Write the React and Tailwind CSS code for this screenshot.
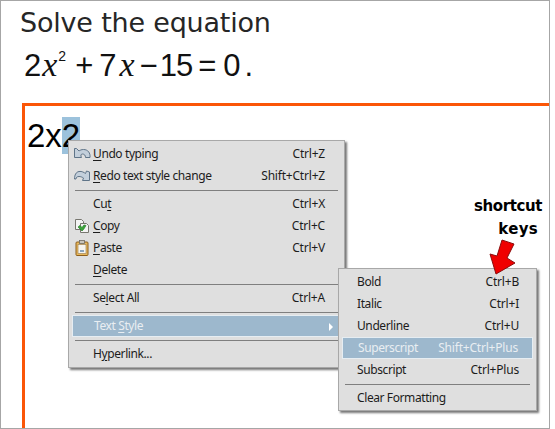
function U({ children }) {
  return <span className="underline decoration-1 underline-offset-2">{children}</span>;
}

function UndoIcon() {
  return (
    <svg width="18" height="14" viewBox="0 0 18 14" className="block">
      <path d="M1.500 2.500v9h7c-1-2-.8-3.500 1-3.500 2 0 3 1.500 3 3.500h4.500c.5-4.500-2-8-6.500-8-2 0-3.500.7-4.500 1.500L3.500 2.500z" fill="#c3cfdb" stroke="#5f7488" strokeWidth="1" />
    </svg>
  );
}

function RedoIcon() {
  return (
    <svg width="18" height="14" viewBox="0 0 18 14" className="block">
      <path d="M1.500 11c0-4 1.500-7 4.500-7.500 3-.5 5 1 6.500 2l1-2.500 3 1v8.500h-7l1-2.500c-1.500-1-3-1.500-4.500-1.500-2 0-3 1-3 2.500H2z" fill="#c3cfdb" stroke="#5f7488" strokeWidth="1" />
    </svg>
  );
}

function CopyIcon() {
  return (
    <svg width="16" height="16" viewBox="0 0 16 16" className="block">
      <path d="M1.500 1.500h6l2 2v8h-8z" fill="#f4f4f4" stroke="#77766f" />
      <path d="M6.500 5.500h6l2 2v7h-8z" fill="#f4f4f4" stroke="#77766f" />
      <path d="M4 9l4 4 1.500-1.500 2.500-4-2-.5-2 2.500-2-2z" fill="#3aa53a" stroke="#2b7b2b" strokeWidth=".7" />
    </svg>
  );
}

function PasteIcon() {
  return (
    <svg width="14" height="16" viewBox="0 0 14 16" className="block">
      <rect x="1" y="2" width="12" height="13.500" rx="1" fill="#e9b95c" stroke="#8c5e1c" />
      <rect x="3" y="4.500" width="8" height="9" fill="#f7f5ef" stroke="#a2875a" strokeWidth=".7" />
      <rect x="4.500" y="0.500" width="5" height="3" fill="#c9c5bb" stroke="#6f6a60" strokeWidth=".8" />
      <path d="M5 10h4v2H5z" fill="#8aa4bd" />
    </svg>
  );
}

function Item({ icon, children, shortcut, active, arrow, inset = "pl-[21px]", pr = "pr-[16px]" }) {
  return (
    <div className={"h-[22px] flex items-center justify-between " + (active ? "bg-[#9db8cd] text-[#e9eef2] border border-[#e6edf2] " : "text-[#1c1c1c] ") + inset + " " + pr + " relative"}>
      {icon && <span className="absolute left-[0px] top-[3px] w-[20px] flex justify-center">{icon}</span>}
      <span className="tracking-[-0.4px]">{children}</span>
      {shortcut && <span className="tracking-[-0.2px]">{shortcut}</span>}
      {arrow && <span className="absolute right-[7px] top-[7px] w-0 h-0 border-y-[4px] border-y-transparent border-l-[4px] border-l-white" />}
    </div>
  );
}

function Sep() {
  return (
    <div className="h-[6px] flex items-center px-[3px]">
      <div className="h-[1px] w-full bg-[#7f7f7f]" />
    </div>
  );
}

export default function App() {
  return (
    <div className="relative w-[555px] h-[429px] bg-white overflow-hidden">
      <div className="w-[550px] h-[429px] border border-[#a6a6a6] overflow-hidden flex flex-col pl-[19px]">
        <div className="shrink-0 h-[46px] pt-[4px] text-[27px] leading-[36px] text-[#262626] [font-family:'DejaVu_Sans',sans-serif] tracking-[-0.2px]">
          Solve the equation
        </div>
        <div className="shrink-0 h-[52px] pl-[4px] flex items-baseline text-[#111] text-[31px] leading-[36px] [font-family:'Liberation_Sans',sans-serif]">
          <span className="mr-[1px]">2</span>
          <span className="[font-family:'Liberation_Serif',serif] italic text-[34px]">x</span>
          <sup className="text-[14px] top-[-15px] leading-none ml-[1px] mr-[9px] relative">2</sup>
          <span className="mr-[6px]">+</span>
          <span className="mr-[3px]">7</span>
          <span className="[font-family:'Liberation_Serif',serif] italic text-[34px] mr-[5px]">x</span>
          <span className="mr-[2px]">−</span>
          <span className="mr-[6px] tracking-[-1px]">15</span>
          <span className="mr-[7px]">=</span>
          <span className="mr-[4px]">0</span>
          <span>.</span>
        </div>
        <div className="shrink-0 ml-[2px] mt-[4px] border-l-[3px] border-t-[3px] border-[#fb5607] h-[400px] -mr-[1px] pl-[2px] pt-[11px] [font-family:'Liberation_Sans',sans-serif] text-[33px] leading-[38px] text-black">
          2x<span className="bg-[#9cc2dc]">2</span>
        </div>
      </div>

      <div className="absolute left-[68px] top-[140px] w-[277px] h-[228px] bg-[#dfdfdf] border border-[#a8a8a8] shadow-[2px_2px_2px_#777] py-[2px] px-[3px] text-[12px] [font-family:'Noto_Sans',sans-serif]">
        <Item icon={<UndoIcon />} shortcut="Ctrl+Z"><U>U</U>ndo typing</Item>
        <Item icon={<RedoIcon />} shortcut="Shift+Ctrl+Z"><U>R</U>edo text style change</Item>
        <Sep />
        <Item shortcut="Ctrl+X">Cu<U>t</U></Item>
        <Item icon={<CopyIcon />} shortcut="Ctrl+C"><U>C</U>opy</Item>
        <Item icon={<PasteIcon />} shortcut="Ctrl+V"><U>P</U>aste</Item>
        <Item><U>D</U>elete</Item>
        <Sep />
        <Item shortcut="Ctrl+A">Se<U>l</U>ect All</Item>
        <Sep />
        <Item active arrow>Text <U>S</U>tyle</Item>
        <Sep />
        <Item>H<U>y</U>perlink...</Item>
      </div>

      <div className="absolute left-[338px] top-[268px] w-[199px] h-[143px] bg-[#dfdfdf] border border-[#a8a8a8] shadow-[2px_2px_2px_#777] py-[2px] px-[3px] text-[12px] [font-family:'Noto_Sans',sans-serif]">
        <Item inset="pl-[15px]" pr="pr-[14px]" shortcut="Ctrl+B">Bold</Item>
        <Item inset="pl-[15px]" pr="pr-[14px]" shortcut="Ctrl+I">Italic</Item>
        <Item inset="pl-[15px]" pr="pr-[14px]" shortcut="Ctrl+U">Underline</Item>
        <Item inset="pl-[15px]" pr="pr-[14px]" active shortcut="Shift+Ctrl+Plus">Superscript</Item>
        <Item inset="pl-[15px]" pr="pr-[14px]" shortcut="Ctrl+Plus">Subscript</Item>
        <Sep />
        <Item inset="pl-[15px]" pr="pr-[14px]">Clear Formatting</Item>
      </div>

      <div className="absolute left-[470px] top-[195px] w-[72px] text-right text-black font-bold text-[15px] leading-[23px] [font-family:'DejaVu_Sans',sans-serif]">
        <div className="tracking-[-0.4px]">shortcut</div>
        <div className="mr-[4px] tracking-[0.3px]">keys</div>
      </div>
      <svg className="absolute left-[489px] top-[239px]" width="30" height="36" viewBox="0 0 30 36">
        <path d="M13 1l12 4-7 14 8 5L7 35 1 15l7 2z" fill="#f00000" stroke="#8a0d0d" strokeWidth="1" />
      </svg>
    </div>
  );
}
